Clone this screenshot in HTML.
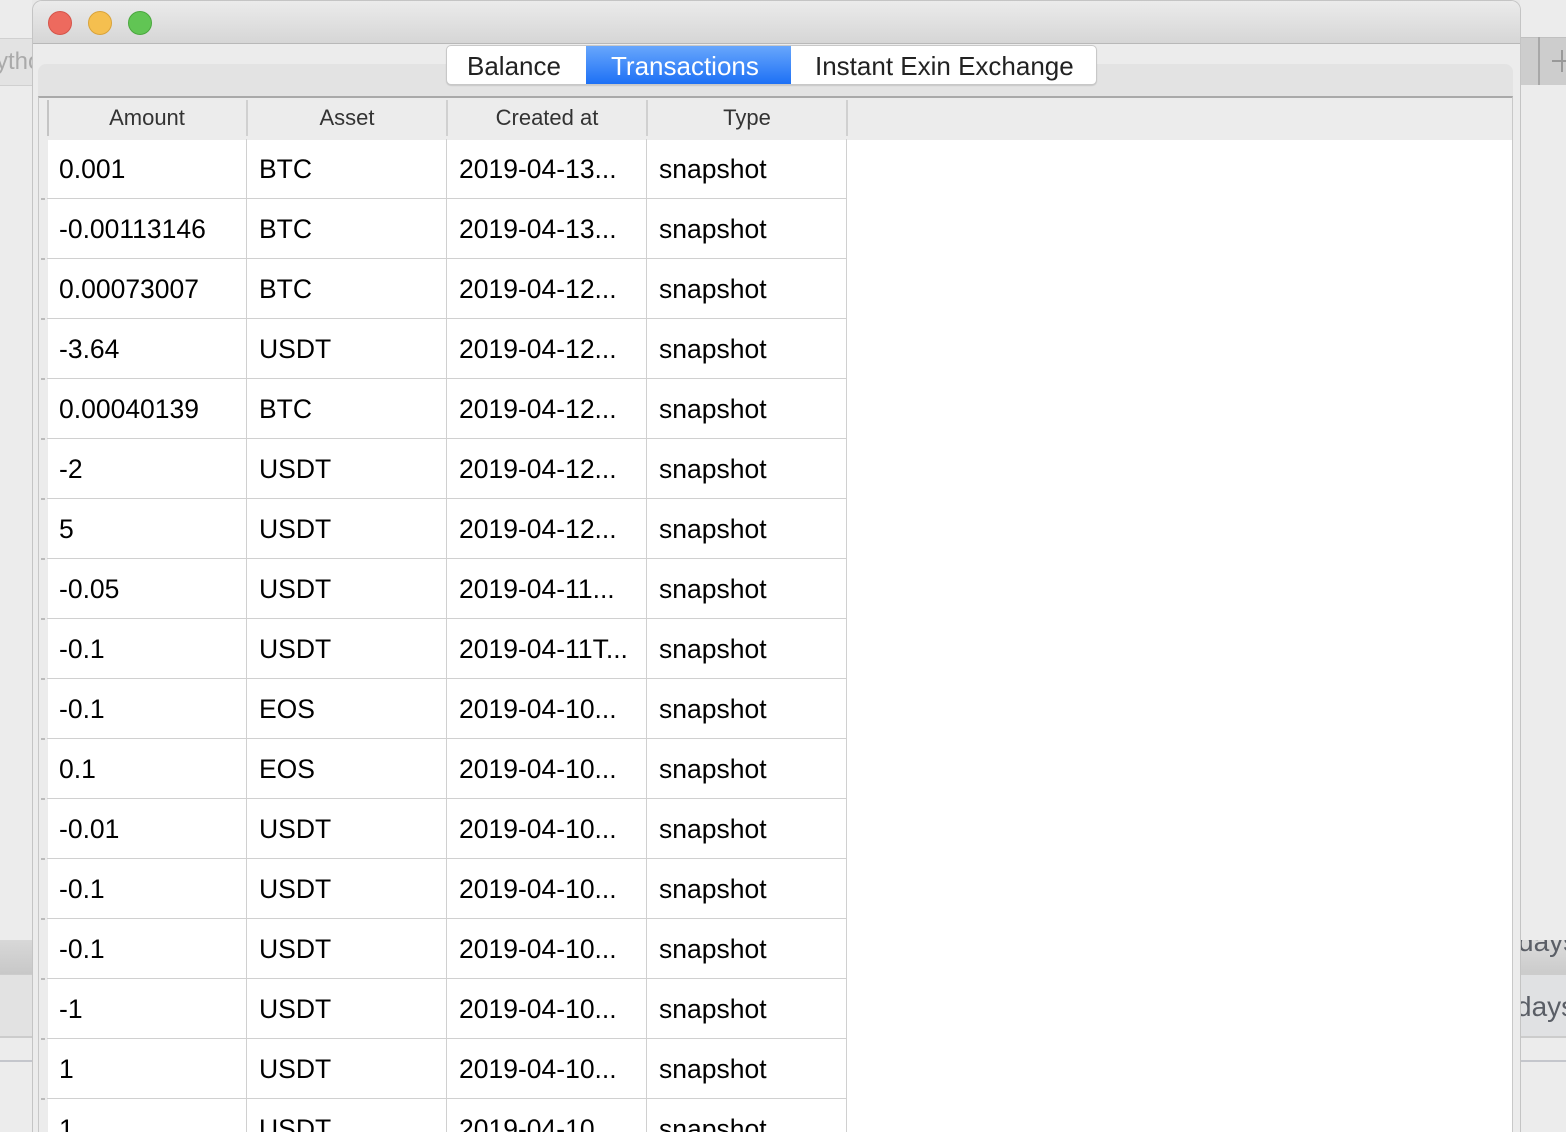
<!DOCTYPE html>
<html style="overflow:hidden;width:1566px;height:1132px"><head><meta charset="utf-8"><style>
*{margin:0;padding:0;box-sizing:border-box}
body{width:1566px;height:1132px;overflow:hidden;position:relative;background:#e8e8e8;font-family:"Liberation Sans",sans-serif;color:#000}
.a{position:absolute}
.row{position:absolute;left:47px;width:800px;height:60px;border-bottom:1px solid #d0d0d0;font-size:26.5px;overflow:hidden}
.row span{position:absolute;top:14px;line-height:32px}
.tick{position:absolute;left:41px;width:4px;height:2px;background:#bbb}
</style></head><body>
<div class="a" style="left:0;top:0;width:1566px;height:1132px;overflow:hidden">
<div class="a" style="left:0;top:0;width:32px;height:1132px;background:#ececec"></div>
<div class="a" style="left:0;top:38px;width:32px;height:48px;background:#e3e3e3;border-top:1px solid #d0d0d0;border-bottom:1px solid #d0d0d0;overflow:hidden"><div class="a" style="left:-4px;top:9px;font-size:24px;color:#aaa;white-space:nowrap;line-height:28px">ytho</div></div>
<div class="a" style="left:0;top:940px;width:32px;height:34px;background:linear-gradient(#d8d8d8,#c8c8c8)"></div>
<div class="a" style="left:0;top:974px;width:32px;height:64px;background:#e2e2e2;border-top:1px solid #ccc;border-bottom:2px solid #ccc"></div>
<div class="a" style="left:0;top:1060px;width:32px;height:2px;background:#c4c6cc"></div>
<div class="a" style="left:1520px;top:0;width:46px;height:1132px;background:#ececec"></div>
<div class="a" style="left:1520px;top:37px;width:46px;height:48px;background:#cdcdcd;border-top:1px solid #c0c0c0"></div>
<div class="a" style="left:1538px;top:37px;width:2px;height:48px;background:#a8a8a8"></div>
<div class="a" style="left:1552px;top:60px;width:14px;height:2px;background:#999"></div>
<div class="a" style="left:1561px;top:50px;width:2px;height:22px;background:#999"></div>
<div class="a" style="left:1520px;top:940px;width:46px;height:34px;background:linear-gradient(#dcdcdc,#cbcbcb);overflow:hidden"><div class="a" style="left:-2px;top:-14px;font-size:28px;color:#5a5e66;white-space:nowrap;line-height:32px">days</div></div>
<div class="a" style="left:1520px;top:973px;width:46px;height:65px;background:#e0e1e3;border-top:2px solid #ccc;border-bottom:2px solid #ccc;overflow:hidden"><div class="a" style="left:-4px;top:16px;font-size:28px;color:#5a5e66;white-space:nowrap;line-height:32px">days</div></div>
<div class="a" style="left:1520px;top:1060px;width:46px;height:2px;background:#c4c6cc"></div>
<div class="a" style="left:32px;top:0;width:1489px;height:1132px;background:#ececec;border:1px solid #c4c4c4;border-bottom:none;border-radius:10px 10px 0 0;overflow:hidden">
  <div class="a" style="left:0;top:0;width:100%;height:43px;background:linear-gradient(#ebebeb,#d6d6d6);border-bottom:1px solid #b8b8b8"></div>
  <div class="a" style="left:15px;top:10px;width:24px;height:24px;border-radius:50%;background:#ed6a5e;border:1px solid #d5544a"></div>
  <div class="a" style="left:55px;top:10px;width:24px;height:24px;border-radius:50%;background:#f5bf4f;border:1px solid #d9a33a"></div>
  <div class="a" style="left:95px;top:10px;width:24px;height:24px;border-radius:50%;background:#61c554;border:1px solid #4aa73e"></div>
  <div class="a" style="left:5px;top:63px;width:1475px;height:1068px;background:#e3e3e3;border-radius:8px 8px 0 0"></div>
  <div class="a" style="left:5px;top:95px;width:1475px;height:1036px;background:#fff;border-top:2px solid #a9a9a9;border-left:1px solid #c8c8c8;border-right:1px solid #c8c8c8"></div>
  <div class="a" style="left:6px;top:97px;width:1473px;height:42px;background:#ececec"></div>
  <div class="a" style="left:6px;top:97px;width:9px;height:1034px;background:#ececec"></div>
</div>
<div class="a" style="left:446px;top:45px;width:651px;height:40px;background:#fff;border:1px solid #c8c8c8;border-radius:5px;box-shadow:0 1px 1px rgba(0,0,0,.12);overflow:hidden;font-size:26px;color:#222">
  <div class="a" style="left:20px;top:5px;line-height:30px">Balance</div>
  <div class="a" style="left:139px;top:-1px;width:205px;height:40px;background:linear-gradient(#6aa8fc,#1b6ff5);color:#fff"><span style="position:absolute;left:25px;top:6px;line-height:30px">Transactions</span></div>
  <div class="a" style="left:368px;top:5px;line-height:30px;white-space:nowrap">Instant Exin Exchange</div>
</div>
<div class="a" style="left:47px;top:100px;width:2px;height:36px;background:#c4c4c4"></div>
<div class="a" style="left:246px;top:100px;width:2px;height:36px;background:#d0d0d0"></div>
<div class="a" style="left:446px;top:100px;width:2px;height:36px;background:#d0d0d0"></div>
<div class="a" style="left:646px;top:100px;width:2px;height:36px;background:#d0d0d0"></div>
<div class="a" style="left:846px;top:100px;width:2px;height:36px;background:#d0d0d0"></div>
<div class="a" style="top:105px;left:47px;width:200px;text-align:center;font-size:22px;color:#333;line-height:26px">Amount</div>
<div class="a" style="top:105px;left:247px;width:200px;text-align:center;font-size:22px;color:#333;line-height:26px">Asset</div>
<div class="a" style="top:105px;left:447px;width:200px;text-align:center;font-size:22px;color:#333;line-height:26px">Created at</div>
<div class="a" style="top:105px;left:647px;width:200px;text-align:center;font-size:22px;color:#333;line-height:26px">Type</div>
<div class="a" style="left:246px;top:139px;width:1px;height:993px;background:#d0d0d0"></div>
<div class="a" style="left:446px;top:139px;width:1px;height:993px;background:#d0d0d0"></div>
<div class="a" style="left:646px;top:139px;width:1px;height:993px;background:#d0d0d0"></div>
<div class="a" style="left:846px;top:139px;width:1px;height:993px;background:#d0d0d0"></div>
<div class="row" style="top:139px"><span style="left:12px">0.001</span><span style="left:212px">BTC</span><span style="left:412px">2019-04-13...</span><span style="left:612px">snapshot</span></div>
<div class="row" style="top:199px"><span style="left:12px">-0.00113146</span><span style="left:212px">BTC</span><span style="left:412px">2019-04-13...</span><span style="left:612px">snapshot</span></div>
<div class="row" style="top:259px"><span style="left:12px">0.00073007</span><span style="left:212px">BTC</span><span style="left:412px">2019-04-12...</span><span style="left:612px">snapshot</span></div>
<div class="row" style="top:319px"><span style="left:12px">-3.64</span><span style="left:212px">USDT</span><span style="left:412px">2019-04-12...</span><span style="left:612px">snapshot</span></div>
<div class="row" style="top:379px"><span style="left:12px">0.00040139</span><span style="left:212px">BTC</span><span style="left:412px">2019-04-12...</span><span style="left:612px">snapshot</span></div>
<div class="row" style="top:439px"><span style="left:12px">-2</span><span style="left:212px">USDT</span><span style="left:412px">2019-04-12...</span><span style="left:612px">snapshot</span></div>
<div class="row" style="top:499px"><span style="left:12px">5</span><span style="left:212px">USDT</span><span style="left:412px">2019-04-12...</span><span style="left:612px">snapshot</span></div>
<div class="row" style="top:559px"><span style="left:12px">-0.05</span><span style="left:212px">USDT</span><span style="left:412px">2019-04-11...</span><span style="left:612px">snapshot</span></div>
<div class="row" style="top:619px"><span style="left:12px">-0.1</span><span style="left:212px">USDT</span><span style="left:412px">2019-04-11T...</span><span style="left:612px">snapshot</span></div>
<div class="row" style="top:679px"><span style="left:12px">-0.1</span><span style="left:212px">EOS</span><span style="left:412px">2019-04-10...</span><span style="left:612px">snapshot</span></div>
<div class="row" style="top:739px"><span style="left:12px">0.1</span><span style="left:212px">EOS</span><span style="left:412px">2019-04-10...</span><span style="left:612px">snapshot</span></div>
<div class="row" style="top:799px"><span style="left:12px">-0.01</span><span style="left:212px">USDT</span><span style="left:412px">2019-04-10...</span><span style="left:612px">snapshot</span></div>
<div class="row" style="top:859px"><span style="left:12px">-0.1</span><span style="left:212px">USDT</span><span style="left:412px">2019-04-10...</span><span style="left:612px">snapshot</span></div>
<div class="row" style="top:919px"><span style="left:12px">-0.1</span><span style="left:212px">USDT</span><span style="left:412px">2019-04-10...</span><span style="left:612px">snapshot</span></div>
<div class="row" style="top:979px"><span style="left:12px">-1</span><span style="left:212px">USDT</span><span style="left:412px">2019-04-10...</span><span style="left:612px">snapshot</span></div>
<div class="row" style="top:1039px"><span style="left:12px">1</span><span style="left:212px">USDT</span><span style="left:412px">2019-04-10...</span><span style="left:612px">snapshot</span></div>
<div class="row" style="top:1099px;height:33px;border-bottom:none"><span style="left:12px">1</span><span style="left:212px">USDT</span><span style="left:412px">2019-04-10...</span><span style="left:612px">snapshot</span></div>
<div class="tick" style="top:198px"></div><div class="tick" style="top:258px"></div><div class="tick" style="top:318px"></div><div class="tick" style="top:378px"></div><div class="tick" style="top:438px"></div><div class="tick" style="top:498px"></div><div class="tick" style="top:558px"></div><div class="tick" style="top:618px"></div><div class="tick" style="top:678px"></div><div class="tick" style="top:738px"></div><div class="tick" style="top:798px"></div><div class="tick" style="top:858px"></div><div class="tick" style="top:918px"></div><div class="tick" style="top:978px"></div><div class="tick" style="top:1038px"></div><div class="tick" style="top:1098px"></div>
</div>
</body></html>
